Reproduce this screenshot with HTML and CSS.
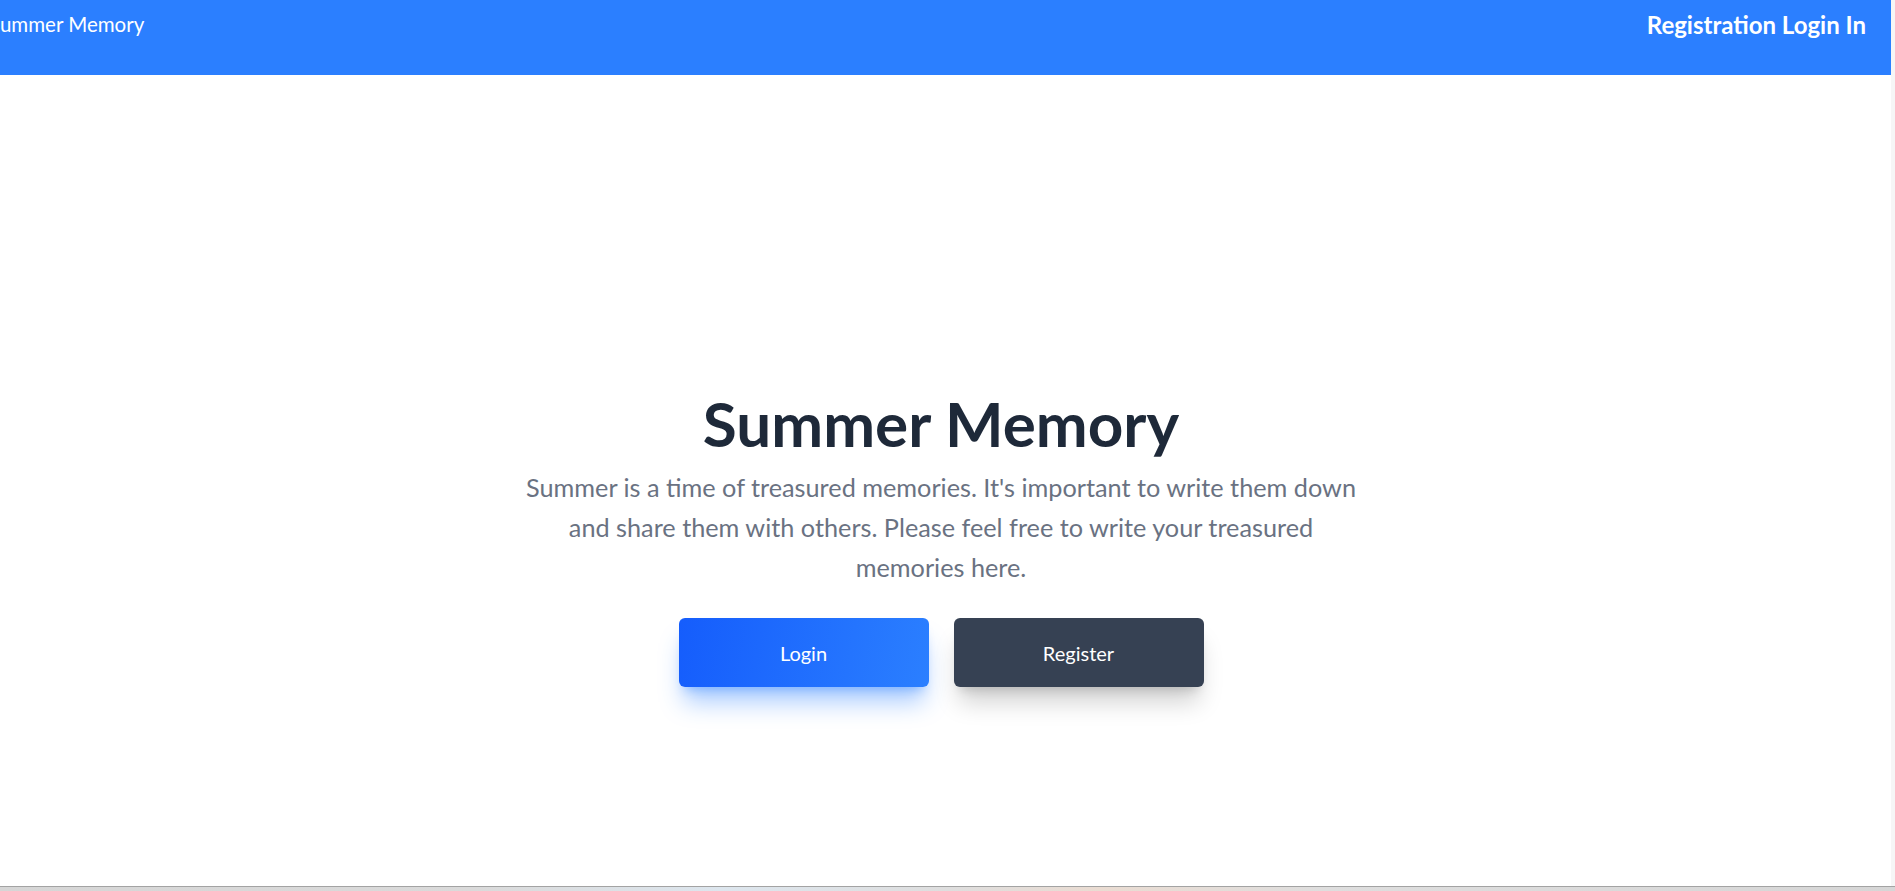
FILE: index.html
```html
<!DOCTYPE html>
<html lang="en">
<head>
<meta charset="utf-8">
<title>Summer Memory</title>
<link rel="stylesheet" href="styles.css">
</head>
<body>
<div class="window">
  <div class="viewport">
    <div class="app">
      <header class="topbar">
        <div class="brand">Summer Memory</div>
        <nav class="nav">Registration Login In</nav>
      </header>
      <main class="hero">
        <h1 class="hero-title">Summer Memory</h1>
        <p class="hero-text">Summer is a time of treasured memories. It's important to write them down and share them with others. Please feel free to write your treasured memories here.</p>
        <div class="actions">
          <a class="btn btn-login" href="#">Login</a>
          <a class="btn btn-register" href="#">Register</a>
        </div>
      </main>
    </div>
    <div class="scroll-strip"></div>
  </div>
  <div class="bottom-bar"></div>
</div>
</body>
</html>
```

FILE: styles.css
```css
html, body {
  margin: 0;
  padding: 0;
  height: 100%;
  overflow: hidden;
  background: #ffffff;
}

body {
  font-family: Lato, "Open Sans", "Liberation Sans", sans-serif;
}

.window {
  display: flex;
  flex-direction: column;
  height: 891px;
}

.viewport {
  flex: 1;
  display: flex;
  min-height: 0;
}

.app {
  flex: 1;
  display: flex;
  flex-direction: column;
  overflow: hidden;
}

.scroll-strip {
  width: 4px;
  background: #f6f6f6;
}

.bottom-bar {
  height: 4px;
  border-top: 1px solid #a3a3a3;
  background: linear-gradient(90deg, #d6d6d6 0%, #dadada 25%, #dde6ee 38%, #dedede 50%, #eadcd2 58%, #dedede 70%, #d6d6d6 100%);
}

.topbar {
  height: 75px;
  box-sizing: border-box;
  background: #2b7fff;
  color: #ffffff;
  display: flex;
  justify-content: space-between;
  align-items: flex-start;
  padding: 10px 25px 0 0;
}

.brand {
  font-size: 20.5px;
  line-height: 28px;
  margin-left: -11px;
  white-space: nowrap;
}

.nav {
  font-size: 24px;
  line-height: 30px;
  font-weight: 700;
  white-space: nowrap;
}

.hero {
  display: flex;
  flex-direction: column;
  align-items: center;
  padding: 318px 9px 0 0;
  text-align: center;
}

.hero-title {
  margin: 0;
  font-size: 62px;
  line-height: 60px;
  font-weight: 700;
  color: #1e2939;
}

.hero-text {
  margin: 14px 0 0;
  max-width: 840px;
  font-size: 25.25px;
  line-height: 40px;
  color: #6a7282;
}

.actions {
  display: flex;
  gap: 25px;
  margin-top: 31px;
}

.btn {
  width: 250px;
  height: 69px;
  box-sizing: border-box;
  display: flex;
  align-items: center;
  justify-content: center;
  border-radius: 6px;
  color: #ffffff;
  font-size: 20px;
  text-decoration: none;
}

.btn-login {
  background: linear-gradient(100deg, #155dfc 0%, #2b7fff 100%);
  box-shadow: 0 20px 25px -5px rgba(43, 127, 255, 0.4), 0 8px 10px -6px rgba(43, 127, 255, 0.4);
}

.btn-register {
  background: #364153;
  box-shadow: 0 20px 25px -5px rgba(0, 0, 0, 0.18), 0 8px 10px -6px rgba(0, 0, 0, 0.16);
}
```
